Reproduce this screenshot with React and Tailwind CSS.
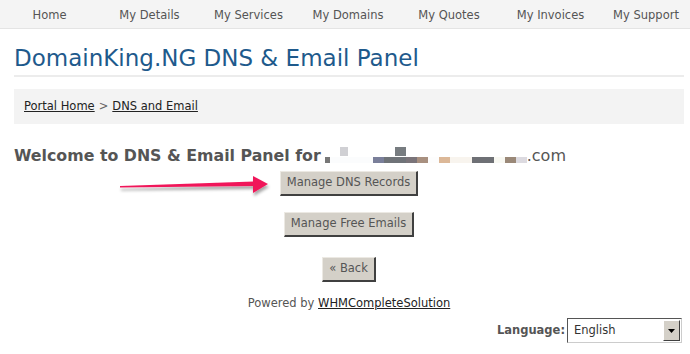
import React from 'react';

const navItems = [
  ['Home', 'w-[99px]'],
  ['My Details', 'w-[101px]'],
  ['My Services', 'w-[97px]'],
  ['My Domains', 'w-[102px]'],
  ['My Quotes', 'w-[100px]'],
  ['My Invoices', 'w-[103px]'],
  ['My Support', 'w-[88px]'],
];

// pixelated (blurred out) domain name
const blurLow = [
  ['w-[5px]', 'bg-[#777777]'],
  ['w-[43px]', 'bg-[#fbfcfd]'],
  ['w-[11px]', 'bg-[#7a7f9a]'],
  ['w-[22px]', 'bg-[#6f7378]'],
  ['w-[11px]', 'bg-[#7a7479]'],
  ['w-[11px]', 'bg-[#a89080]'],
  ['w-[11px]', 'bg-[#fdfdfd]'],
  ['w-[11px]', 'bg-[#dcb898]'],
  ['w-[22px]', 'bg-[#f8f4ee]'],
  ['w-[22px]', 'bg-[#6e7075]'],
  ['w-[11px]', 'bg-[#f8f8f2]'],
  ['w-[11px]', 'bg-[#9a8878]'],
  ['w-[11px]', 'bg-[#dcdae0]'],
];

function Button({ children }) {
  return (
    <button className="bg-[#d4d0c8] text-[#555] text-[11.5px] leading-none px-[6px] h-[25px] border border-t-[#ece9e3] border-l-[#ece9e3] border-r-[#404040] border-b-[#404040] border-r-2 border-b-2">
      {children}
    </button>
  );
}

export default function App() {
  return (
    <div className="relative w-[690px] h-[354px] bg-white overflow-hidden font-['DejaVu_Sans',sans-serif] text-[11.5px] text-[#555]">
      <nav className="flex h-[29px] bg-[#f4f4f4] border-b border-[#e4e4e4]">
        {navItems.map(([label, w]) => (
          <a key={label} className={`${w} flex items-center justify-center pt-[3px] text-[#555]`}>
            {label}
          </a>
        ))}
      </nav>

      <div className="pl-[14px] pr-[6px]">
        <h1 className="text-[23px] leading-none text-[#1e5a8c] pt-[18px] pb-[5px] border-b-2 border-[#ececec]">
          DomainKing.NG DNS &amp; Email Panel
        </h1>

        <div className="mt-[12px] h-[35px] bg-[#f3f3f3] flex items-center px-[10px] text-[#222]">
          <a className="underline">Portal Home</a>
          <span className="mx-[4px] text-[#666]">&gt;</span>
          <a className="underline">DNS and Email</a>
        </div>

        <h2 className="mt-[23px] flex items-end text-[15.8px] font-bold leading-none text-[#555]">
          <span>Welcome to DNS &amp; Email Panel for</span>
          <span className="relative flex ml-[4px] mb-[1px] h-[16px] items-end">
            <span className="absolute left-[15px] top-0 w-[8px] h-[9px] bg-[#d0d0d4]" />
            <span className="absolute left-[70px] top-0 w-[11px] h-[9px] bg-[#777c80]" />
            {blurLow.map(([w, c], i) => (
              <span key={i} className={`${w} ${c} h-[6px]`} />
            ))}
          </span>
          <span className="font-normal text-[16px]">.com</span>
        </h2>

        <div className="flex flex-col items-center mt-[7px] pr-[8px] -mr-[6px] pl-[2px]">
          <Button>Manage DNS Records</Button>
          <div className="mt-[16px]">
            <Button>Manage Free Emails</Button>
          </div>
          <div className="mt-[20px]">
            <Button>&laquo; Back</Button>
          </div>
          <p className="mt-[13px] text-[11.5px] text-[#555]">
            Powered by <a className="underline text-[#222]">WHMCompleteSolution</a>
          </p>
        </div>

        <div className="flex justify-end items-center mt-[6px] mr-[2px]">
          <span className="font-bold text-[#555] mr-[2px]">Language:</span>
          <div className="w-[115px] h-[25px] flex border border-[#555] border-r-[#ccc] border-b-[#ccc] bg-white">
            <span className="flex-1 flex items-center pl-[6px] text-[#333]">English</span>
            <span className="w-[17px] my-[1px] mr-[1px] flex items-center justify-center bg-[#d4d0c8] border border-t-[#fff] border-l-[#fff] border-r-[#404040] border-b-[#404040]">
              <svg width="7" height="4" viewBox="0 0 7 4"><path d="M0 0h7L3.5 4z" fill="#000" /></svg>
            </span>
          </div>
        </div>
      </div>

      {/* annotation arrow */}
      <svg className="absolute left-[110px] top-[170px]" width="170" height="35" viewBox="0 0 170 35">
        <defs>
          <filter id="sh" x="-10%" y="-50%" width="120%" height="200%">
            <feDropShadow dx="1" dy="3" stdDeviation="1.5" floodColor="#000" floodOpacity="0.35" />
          </filter>
        </defs>
        <g filter="url(#sh)">
          <path d="M10 17.5 L10 16 L144 11.5 L144 16 Z" fill="#f0185a" />
          <path d="M143 6 L158 14 L143 23 Z" fill="#f0185a" />
        </g>
      </svg>
    </div>
  );
}
